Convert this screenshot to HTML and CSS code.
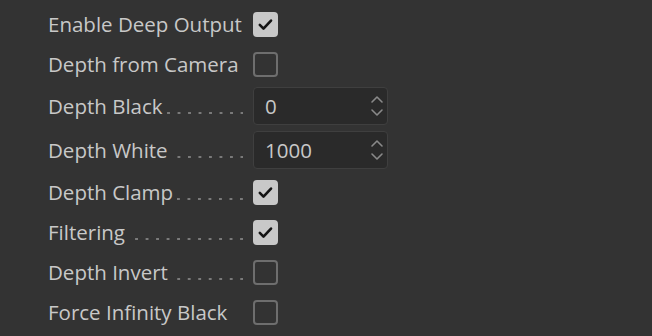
FILE: index.html
```html
<!DOCTYPE html>
<html lang="en">
<head>
  <meta charset="UTF-8" />
  <title>Deep Output</title>
  <link rel="stylesheet" href="styles.css">
</head>
<body>
  <div class="panel">
    <div class="row">
      <span class="label">Enable Deep Output</span>
      <span class="check on"><svg viewBox="0 0 24 24"><path d="M5.5 12.5l4.2 4.2 8.6-9.2"/></svg></span>
    </div>
    <div class="row">
      <span class="label">Depth from Camera</span>
      <span class="check"></span>
    </div>
    <div class="row tall">
      <span class="label">Depth Black<span class="dots"></span></span>
      <div class="number">
        <span class="value">0</span>
        <svg class="spin" viewBox="0 0 14 26"><path d="M2 9l5-5 5 5M2 17l5 5 5-5"/></svg>
      </div>
    </div>
    <div class="row tall">
      <span class="label">Depth White<span class="dots"></span></span>
      <div class="number">
        <span class="value">1000</span>
        <svg class="spin" viewBox="0 0 14 26"><path d="M2 9l5-5 5 5M2 17l5 5 5-5"/></svg>
      </div>
    </div>
    <div class="row">
      <span class="label">Depth Clamp<span class="dots"></span></span>
      <span class="check on"><svg viewBox="0 0 24 24"><path d="M5.5 12.5l4.2 4.2 8.6-9.2"/></svg></span>
    </div>
    <div class="row">
      <span class="label">Filtering<span class="dots"></span></span>
      <span class="check on"><svg viewBox="0 0 24 24"><path d="M5.5 12.5l4.2 4.2 8.6-9.2"/></svg></span>
    </div>
    <div class="row">
      <span class="label">Depth Invert<span class="dots"></span></span>
      <span class="check"></span>
    </div>
    <div class="row">
      <span class="label">Force Infinity Black</span>
      <span class="check"></span>
    </div>
  </div>
</body>
</html>
```

FILE: styles.css
```css
body {
  margin: 0;
  background: #333333;
  font-family: "Open Sans", "Noto Sans", sans-serif;
  font-size: 20.5px;
  color: #c8c8c8;
  width: 652px;
  height: 336px;
  overflow: hidden;
}
.panel {
  padding: 4px 0 0 48px;
}
.row {
  display: flex;
  align-items: center;
  height: 40px;
}
.row.tall {
  height: 44px;
}
.label {
  display: flex;
  align-items: baseline;
  width: 195px;
  margin-right: 10px;
  white-space: nowrap;
}
.dots {
  flex: 1;
  height: 2px;
  margin-left: 3px;
  background: linear-gradient(to right, transparent 7.5px, #7a7a7a 7.5px) right / 10.5px 2px repeat-x;
}
.check {
  box-sizing: border-box;
  width: 25px;
  height: 25px;
  border: 2px solid #6e6e6e;
  border-radius: 4px;
}
.check.on {
  background: #c8c8c8;
  border-color: #c8c8c8;
}
.check svg {
  display: block;
  width: 21px;
  height: 21px;
  fill: none;
  stroke: #141414;
  stroke-width: 3;
  stroke-linecap: round;
  stroke-linejoin: round;
}
.number {
  box-sizing: border-box;
  display: flex;
  align-items: center;
  width: 135px;
  height: 38px;
  padding: 0 3px 0 11px;
  background: #2a2a2a;
  border: 1px solid #3f3f3f;
  border-radius: 4px;
}
.value {
  flex: 1;
}
.spin {
  width: 14px;
  height: 26px;
  fill: none;
  stroke: #8a8a8a;
  stroke-width: 1.6;
  stroke-linecap: round;
  stroke-linejoin: round;
}
```
